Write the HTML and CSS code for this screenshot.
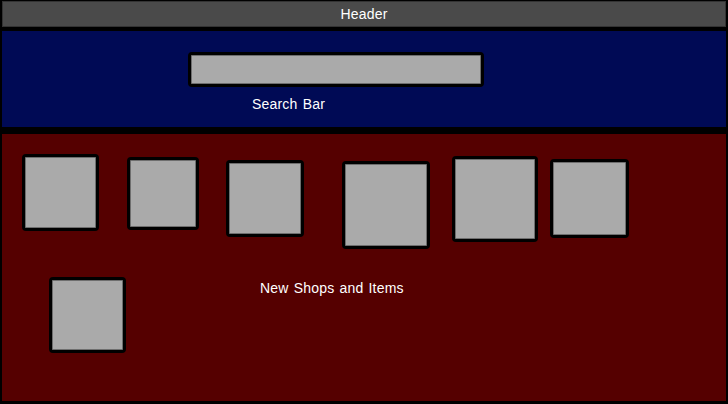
FILE: index.html
```html
<!DOCTYPE html>
<html lang="en">
<head>
<meta charset="utf-8">
<title>Wireframe</title>
<link rel="stylesheet" href="styles.css">
</head>
<body>
<div class="page">
  <div class="header">Header</div>
  <div class="search">
    <div class="search-bar"></div>
    <div class="label search-label">Search Bar</div>
  </div>
  <div class="canvas">
    <div class="box b1"></div>
    <div class="box b2"></div>
    <div class="box b3"></div>
    <div class="box b4"></div>
    <div class="box b5"></div>
    <div class="box b6"></div>
    <div class="box b7"></div>
    <div class="label canvas-label">New Shops and Items</div>
  </div>
</div>
</body>
</html>
```
FILE: styles.css
```css
html, body {
  margin: 0;
  padding: 0;
  background: #000;
}
body {
  width: 728px;
  height: 404px;
  overflow: hidden;
  font-family: "Liberation Sans", Arial, sans-serif;
  font-size: 14px;
  line-height: 16px;
  word-spacing: 1px;
  letter-spacing: 0.2px;
  color: #fff;
}
.page {
  display: flex;
  flex-direction: column;
  padding: 1px 2px 3px 2px;
}
.header {
  height: 26px;
  background: #4a4a4a;
  box-shadow: inset 0 0 0 1px #333;
  display: flex;
  align-items: center;
  justify-content: center;
}
.search {
  margin-top: 4px;
  height: 96px;
  background: #000a55;
  display: flex;
  flex-direction: column;
  align-items: flex-start;
}
.search-bar {
  box-sizing: border-box;
  margin-top: 21px;
  margin-left: 186px;
  width: 296px;
  height: 35px;
  background: #aaaaaa;
  border: 3px solid #000;
  border-radius: 4px;
  box-shadow: inset 0 0 0 1px #6e6e6e;
}
.search-label {
  margin-top: 9px;
  margin-left: 250px;
}
.canvas {
  margin-top: 7px;
  height: 267px;
  background: #550000;
  position: relative;
}
.box {
  position: absolute;
  box-sizing: border-box;
  background: #aaaaaa;
  border: 3px solid #000;
  border-radius: 4px;
  box-shadow: inset 0 0 0 1px #6e6e6e;
}
.b1 { left: 20px; top: 20px; width: 77px; height: 77px; }
.b2 { left: 125px; top: 23px; width: 72px; height: 73px; }
.b3 { left: 224px; top: 26px; width: 78px; height: 77px; }
.b4 { left: 340px; top: 27px; width: 88px; height: 88px; }
.b5 { left: 450px; top: 22px; width: 86px; height: 86px; }
.b6 { left: 548px; top: 25px; width: 79px; height: 79px; }
.b7 { left: 47px; top: 143px; width: 77px; height: 76px; }
.canvas-label {
  position: absolute;
  left: 258px;
  top: 146px;
  white-space: nowrap;
}
```
